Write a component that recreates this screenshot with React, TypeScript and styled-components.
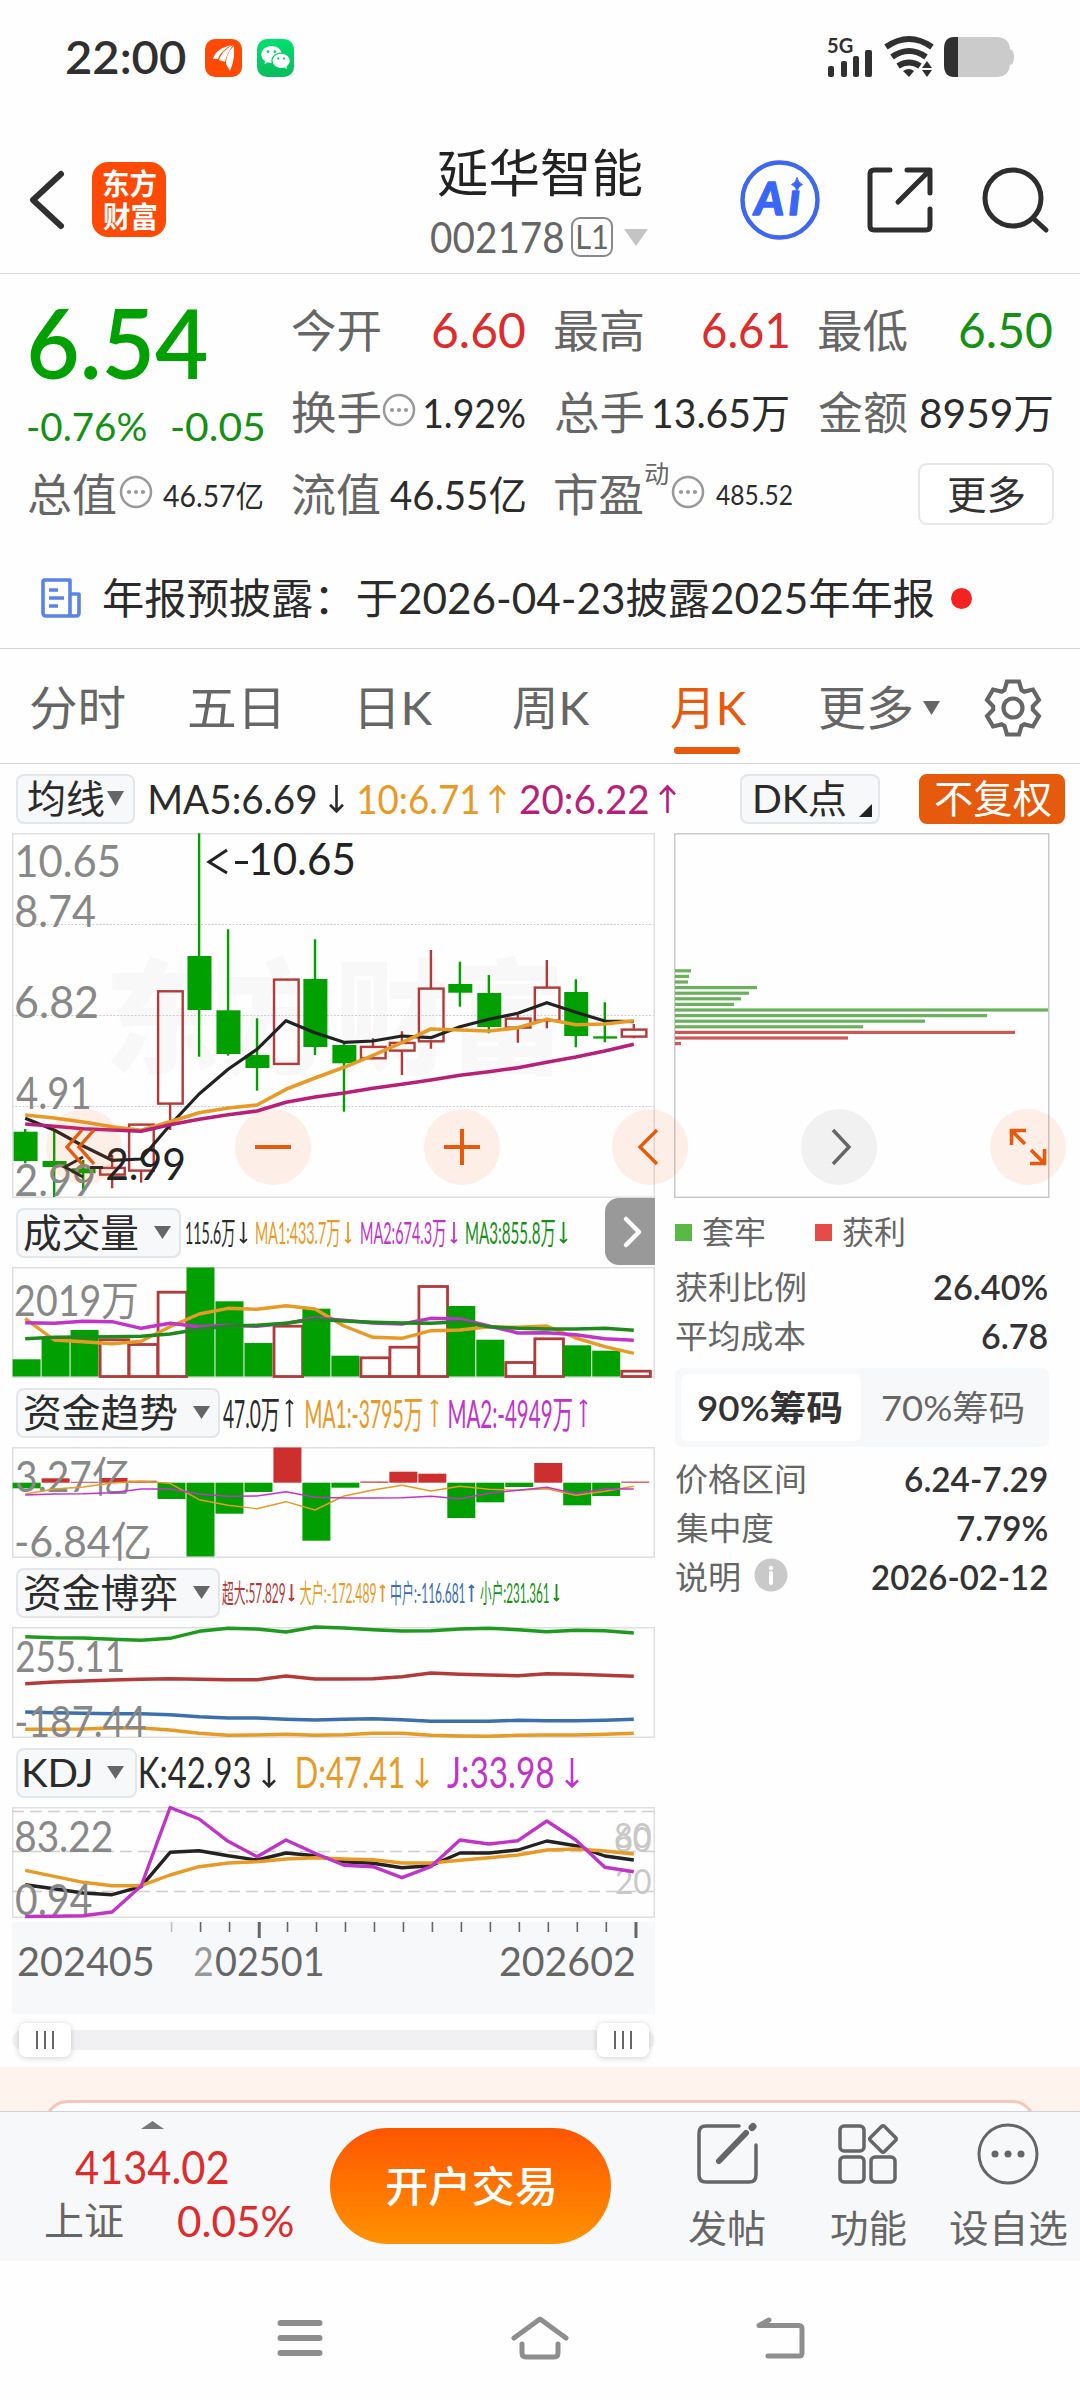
import React from 'react';
import styled, { createGlobalStyle, css } from 'styled-components';
import { RiWechatFill } from 'react-icons/ri';

const FONT = "Lato, 'Noto Sans CJK SC', sans-serif";

const C = {
  ink: '#2b2b2b',
  sub: '#666666',
  faint: '#888888',
  line: '#d4d4d4',
  red: '#dc2c2c',
  green: '#00a000',
  greenText: '#149014',
  orange: '#e79a26',
  magenta: '#b81f78',
  purple: '#c034c8',
  blue: '#3b6fae',
  wine: '#b23a38',
  brand: '#e55a0c',
  panel: '#f7f8fa',
};

const Global = createGlobalStyle`
  html, body { margin: 0; padding: 0; background: #fefefe; }
  * { box-sizing: border-box; }
  body { width: 1080px; height: 2400px; overflow: hidden; font-family: ${FONT}; color: ${C.ink}; }
  svg { display: block; flex: none; overflow: visible; }
`;

/* ---------- text that shrinks or stretches to its column ---------- */

let ctx: CanvasRenderingContext2D | null = null;
function inkBox(text: string, size: number, weight: number) {
  if (!ctx) ctx = document.createElement('canvas').getContext('2d');
  ctx!.font = `${weight} ${size}px ${FONT}`;
  const m = ctx!.measureText(text);
  return { left: m.actualBoundingBoxLeft, width: m.actualBoundingBoxLeft + m.actualBoundingBoxRight };
}

const FitBox = styled.span<{ $w: number; $size: number; $weight: number; $color?: string; $ml?: number; $lift?: number }>`
  display: block;
  flex: none;
  width: ${p => p.$w}px;
  height: ${p => p.$size}px;
  line-height: ${p => p.$size}px;
  font-size: ${p => p.$size}px;
  font-weight: ${p => p.$weight};
  margin-left: ${p => p.$ml ?? 0}px;
  margin-bottom: ${p => (p.$lift ?? 0) * 2}px;
  color: ${p => p.$color ?? 'inherit'};
  white-space: nowrap;
`;
const FitInner = styled.span`
  display: inline-block;
  transform-origin: 0 50%;
`;

type FitProps = { children: string; w: number; size: number; weight?: number; color?: string; ml?: number; lift?: number };
function Fit({ children, w, size, weight = 400, color, ml, lift }: FitProps) {
  const box = inkBox(children, size, weight);
  const s = w / box.width;
  return (
    <FitBox $w={w} $size={size} $weight={weight} $color={color} $ml={ml} $lift={lift}>
      <FitInner style={{ transform: `translateX(${box.left * s}px) scaleX(${s})` }}>{children}</FitInner>
    </FitBox>
  );
}

function ChartLabel({ x, y, w, size, color = C.faint, weight = 400, children }: {
  x: number; y: number; w: number; size: number; color?: string; weight?: number; children: string;
}) {
  const box = inkBox(children, size, weight);
  const s = w / box.width;
  return (
    <text transform={`translate(${x + box.left * s} ${y}) scale(${s} 1)`} fontFamily={FONT} fontSize={size} fontWeight={weight} fill={color}>
      {children}
    </text>
  );
}

/* ---------- status bar ---------- */

const StatusBar = styled.div`
  height: 115px;
  padding-left: 67px;
  display: flex;
  align-items: center;
`;
const AppBadge = styled.div<{ $bg: string; $ml: number }>`
  width: 37px;
  height: 38px;
  border-radius: 10px;
  margin-left: ${p => p.$ml}px;
  background: ${p => p.$bg};
  color: #fff;
  display: flex;
  align-items: center;
  justify-content: center;
`;
const StatusIcons = styled.div`
  margin-left: 532px;
`;

function Status() {
  return (
    <StatusBar>
      <Fit w={118} size={47} weight={600} color="#303030" lift={1}>22:00</Fit>
      <AppBadge $bg="#fe4a05" $ml={20}>
        <svg width="26" height="28" viewBox="0 0 26 28" fill="#fff">
          <path d="M2 15C4 8 9 4 20 1C13 6 9 9 7 15Z" />
          <path d="M8 16C10 10 14 5 22 1C18 7 15 12 14 18Z" />
          <path d="M15 20C15 13 18 6 23 2C23 9 24 15 19 27Z" />
        </svg>
      </AppBadge>
      <AppBadge $bg="linear-gradient(#00e070, #0cbc5c)" $ml={15}><RiWechatFill size={31} /></AppBadge>
      <StatusIcons>
        <svg width="190" height="44" viewBox="826 36 190 44" fill="#303030">
          <ChartLabel x={827} y={53} w={26} size={21} weight={700} color="#303030">5G</ChartLabel>
          <rect x="828" y="66" width="6" height="11" rx="2" />
          <rect x="841" y="61" width="6" height="16" rx="2" />
          <rect x="853" y="56" width="6" height="21" rx="2" />
          <rect x="865" y="50" width="7" height="27" rx="2" />
          <g fill="none" stroke="#303030" strokeWidth="6">
            <path d="M886 47Q909 31 932 47" />
            <path d="M892 57Q909 45 926 57" />
            <path d="M898 66Q909 59 920 66" />
          </g>
          <path d="M903 71Q909 67 914 71L909 77Z" />
          <path d="M927 61L932 68H922ZM922 70H932L927 77Z" />
          <path d="M958 37H996Q1010 37 1010 51V63Q1010 77 996 77H958Z" fill="#cbcbcb" />
          <path d="M1010 49Q1014 50 1014 57Q1014 64 1010 65Z" fill="#cbcbcb" />
          <path d="M958 37H954Q944 37 944 49V65Q944 77 954 77H958Z" />
        </svg>
      </StatusIcons>
    </StatusBar>
  );
}

/* ---------- header ---------- */

const Header = styled.header`
  height: 159px;
  padding: 11px 0 0 29px;
  display: flex;
  align-items: center;
  border-bottom: 1px solid ${C.line};
`;
const Brand = styled.div`
  width: 74px;
  height: 75px;
  margin-left: 28px;
  border-radius: 16px;
  background: #fe4a05;
  display: flex;
  flex-direction: column;
  align-items: center;
  justify-content: center;
  gap: 4px;
`;
const TitleCol = styled.div`
  margin-left: 264px;
  width: 310px;
  padding-top: 10px;
`;
const TitleLine = styled.div<{ $pl: number }>`
  height: 65px;
  padding-left: ${p => p.$pl}px;
  display: flex;
  align-items: center;
`;
const LevelTag = styled.span`
  width: 42px;
  height: 40px;
  margin-left: 8px;
  border: 2px solid #888;
  border-radius: 9px;
  display: flex;
  align-items: center;
  justify-content: center;
`;
const HeaderIcon = styled.div<{ $ml: number }>`
  margin-left: ${p => p.$ml}px;
`;

function Head() {
  return (
    <Header>
      <svg width="35" height="60" viewBox="0 0 35 60" fill="none" stroke="#303030" strokeWidth="6" strokeLinecap="round" strokeLinejoin="round">
        <path d="M32 4L4 30L32 56" />
      </svg>
      <Brand>
        <Fit w={53} size={29} weight={600} color="#fff">东方</Fit>
        <Fit w={53} size={29} weight={600} color="#fff">财富</Fit>
      </Brand>
      <TitleCol>
        <TitleLine $pl={8}><Fit w={204} size={51} color="#222">延华智能</Fit></TitleLine>
        <TitleLine $pl={1}>
          <Fit w={132} size={43} color={C.sub} lift={1}>002178</Fit>
          <LevelTag><Fit w={29} size={33} color={C.sub} lift={1}>L1</Fit></LevelTag>
          <HeaderIcon $ml={11}>
            <svg width="24" height="17"><path d="M0 0H24L12 17Z" fill="#c4c4c4" /></svg>
          </HeaderIcon>
        </TitleLine>
      </TitleCol>
      <svg width="80" height="82" viewBox="0 0 80 82">
        <circle cx="40" cy="41" r="37.5" fill="#fff" stroke="#3e66ee" strokeWidth="4.5" />
        <text x="14.500 49" y="56" fontFamily="Lato, sans-serif" fontSize="45" fontWeight="900" fontStyle="italic" fill="#3a66f8" stroke="#3a66f8" strokeWidth="1.500" strokeLinejoin="round">Ai</text>
        <circle cx="58" cy="24" r="7.500" fill="#fff" />
        <path d="M57 18.500Q58 24 62.500 25.500Q58 27 57 32.500Q56 27 51.500 25.500Q56 24 57 18.500Z" fill="#3a66f8" stroke="#3a66f8" />
      </svg>
      <HeaderIcon $ml={47}>
        <svg width="66" height="66" viewBox="0 0 66 66" fill="none" stroke="#2e2e2e" strokeWidth="5" strokeLinecap="round" strokeLinejoin="round">
          <path d="M23 3H7Q3 3 3 7V59Q3 63 7 63H59Q63 63 63 59V42" />
          <path d="M40 3H63V26M61 5L31 35" />
        </svg>
      </HeaderIcon>
      <HeaderIcon $ml={49}>
        <svg width="68" height="68" viewBox="0 0 68 68" fill="none" stroke="#2e2e2e" strokeWidth="5" strokeLinecap="round">
          <circle cx="31" cy="32" r="28" />
          <path d="M52 53L64 64" />
        </svg>
      </HeaderIcon>
    </Header>
  );
}

/* ---------- quote ---------- */

const Quote = styled.section`
  height: 262px;
  padding: 16px 28px 0 28px;
  display: flex;
`;
const QuoteCol = styled.div<{ $w: number; $ml?: number }>`
  width: ${p => p.$w}px;
  margin-left: ${p => p.$ml ?? 0}px;
`;
const QuoteRow = styled.div<{ $h?: number }>`
  height: ${p => p.$h ?? 82}px;
  display: flex;
  align-items: center;
  justify-content: space-between;
`;
const LabelGroup = styled.div`
  display: flex;
  align-items: center;
`;
const MoreButton = styled.button`
  width: 136px;
  height: 62px;
  padding: 0;
  margin: 0 -2px 2px auto;
  border: 2px solid #e6e7ea;
  border-radius: 9px;
  background: #fff;
  display: flex;
  align-items: center;
  justify-content: center;
  font-family: inherit;
`;
const HintBox = styled.span<{ $ml: number }>`
  margin: 0 0 7px ${p => p.$ml}px;
`;
const Hint = ({ ml }: { ml: number }) => (
  <HintBox $ml={ml}>
    <svg width="34" height="34" viewBox="0 0 34 34">
      <circle cx="17" cy="17" r="15" fill="none" stroke="#999" strokeWidth="2.500" />
      <circle cx="10" cy="17" r="2.100" fill="#999" /><circle cx="17" cy="17" r="2.100" fill="#999" /><circle cx="24" cy="17" r="2.100" fill="#999" />
    </svg>
  </HintBox>
);
const Name = ({ children }: { children: string }) => <Fit w={88} size={45} color={C.sub}>{children}</Fit>;

function QuotePanel() {
  return (
    <Quote>
      <QuoteCol $w={235}>
        <QuoteRow $h={110}><Fit w={177} size={96} weight={600} color={C.green} ml={2} lift={3}>6.54</Fit></QuoteRow>
        <QuoteRow $h={54}>
          <Fit w={118} size={39} color={C.greenText} lift={1}>-0.76%</Fit>
          <Fit w={91} size={39} color={C.greenText} lift={1}>-0.05</Fit>
        </QuoteRow>
        <QuoteRow>
          <LabelGroup><Name>总值</Name><Hint ml={3} /></LabelGroup>
          <Fit w={100} size={30}>46.57亿</Fit>
        </QuoteRow>
      </QuoteCol>
      <QuoteCol $w={234} $ml={29}>
        <QuoteRow><Name>今开</Name><Fit w={92} size={48} color={C.red} lift={1}>6.60</Fit></QuoteRow>
        <QuoteRow>
          <LabelGroup><Name>换手</Name><Hint ml={2} /></LabelGroup>
          <Fit w={100} size={40}>1.92%</Fit>
        </QuoteRow>
        <QuoteRow><Name>流值</Name><Fit w={135} size={40}>46.55亿</Fit></QuoteRow>
      </QuoteCol>
      <QuoteCol $w={233} $ml={30}>
        <QuoteRow><Name>最高</Name><Fit w={85} size={48} color={C.red} lift={1}>6.61</Fit></QuoteRow>
        <QuoteRow><Name>总手</Name><Fit w={134} size={40}>13.65万</Fit></QuoteRow>
        <QuoteRow>
          <LabelGroup><Name>市盈</Name><Fit w={23} size={25} color={C.sub} ml={2} lift={22}>动</Fit><Hint ml={3} /><Fit w={76} size={26} ml={11}>485.52</Fit></LabelGroup>
        </QuoteRow>
      </QuoteCol>
      <QuoteCol $w={233} $ml={31}>
        <QuoteRow><Name>最低</Name><Fit w={92} size={48} color={C.greenText} lift={1}>6.50</Fit></QuoteRow>
        <QuoteRow><Name>金额</Name><Fit w={132} size={40}>8959万</Fit></QuoteRow>
        <QuoteRow><MoreButton><Fit w={76} size={39} color="#333">更多</Fit></MoreButton></QuoteRow>
      </QuoteCol>
    </Quote>
  );
}

const News = styled.div`
  height: 113px;
  padding: 12px 0 0 41px;
  display: flex;
  align-items: center;
  border-bottom: 1px solid ${C.line};
`;
const RedDot = styled.i`
  width: 21px;
  height: 21px;
  margin-left: 17px;
  border-radius: 50%;
  background: #f52222;
`;

/* ---------- tabs ---------- */

const Tabs = styled.nav`
  height: 115px;
  padding: 3px 0 0 31px;
  display: flex;
  align-items: center;
  border-bottom: 1px solid ${C.line};
`;
const Tab = styled.div<{ $ml?: number; $on?: boolean }>`
  position: relative;
  margin-left: ${p => p.$ml ?? 0}px;
  color: ${p => (p.$on ? C.brand : C.sub)};
  ${p => p.$on && css`
    &::after {
      content: '';
      position: absolute;
      left: 3px;
      top: 63px;
      width: 66px;
      height: 7px;
      border-radius: 3px;
      background: ${C.brand};
    }
  `}
`;
const CaretBox = styled.span<{ $ml: number }>`
  margin-left: ${p => p.$ml}px;
`;
const Caret = ({ ml, w = 17, h = 13 }: { ml: number; w?: number; h?: number }) => (
  <CaretBox $ml={ml}><svg width={w} height={h}><path d={`M0 0H${w}L${w / 2} ${h}Z`} fill="#666" /></svg></CaretBox>
);

function gearPath() {
  const pts: string[] = [];
  for (let k = 0; k < 6; k++) {
    const a = (k * Math.PI) / 3;
    [[-8.5, -18], [-6, -26.5], [6, -26.5], [8.5, -18]].forEach(([x, y]) => {
      pts.push(`${(x * Math.cos(a) - y * Math.sin(a)).toFixed(2)},${(x * Math.sin(a) + y * Math.cos(a)).toFixed(2)}`);
    });
  }
  return pts.join(' ');
}

const IndicatorRow = styled.div`
  height: 69px;
  padding-left: 16px;
  display: flex;
  align-items: center;
`;
const Chip = styled.div<{ $w: number; $pl: number; $ml?: number; $solid?: boolean }>`
  width: ${p => p.$w}px;
  height: 50px;
  flex: none;
  margin-left: ${p => p.$ml ?? 0}px;
  padding-left: ${p => p.$pl}px;
  border-radius: 8px;
  display: flex;
  align-items: center;
  border: 2px solid ${p => (p.$solid ? C.brand : '#e2e5ea')};
  background: ${p => (p.$solid ? C.brand : C.panel)};
  color: ${p => (p.$solid ? '#fff' : C.ink)};
`;

const ArrowBox = styled.span<{ $ml: number }>`
  margin-left: ${p => p.$ml}px;
`;
function Arrow({ up, w, h, ml, color }: { up?: boolean; w: number; h: number; ml: number; color: string }) {
  const k = w * 0.55;
  const d = up
    ? `M${w / 2} ${h}V1M1 ${k}L${w / 2} 1.500L${w - 1} ${k}`
    : `M${w / 2} 0V${h - 1}M1 ${h - k}L${w / 2} ${h - 1.5}L${w - 1} ${h - k}`;
  return (
    <ArrowBox $ml={ml}>
      <svg width={w} height={h} fill="none" stroke={color} strokeWidth={w > 11 ? 2.6 : 1.8}><path d={d} /></svg>
    </ArrowBox>
  );
}

type Reading = { t: string; w: number; ml: number; aw: number; aml: number; up?: boolean; c: string };
function Readings({ items, size, h, lift }: { items: Reading[]; size: number; h: number; lift?: number }) {
  return (
    <>
      {items.map(r => (
        <React.Fragment key={r.t}>
          <Fit w={r.w} size={size} ml={r.ml} color={r.c} lift={lift}>{r.t}</Fit>
          <Arrow w={r.aw} h={h} ml={r.aml} up={r.up} color={r.c} />
        </React.Fragment>
      ))}
    </>
  );
}

/* ---------- chart data ---------- */

const W = 643;
const cx = (i: number) => 13.2 + 28.98 * i;
const pts = (ys: number[]) => ys.map((y, i) => `${cx(i).toFixed(1)},${y}`).join(' ');

// [rising, body top, body bottom, wick top, wick bottom]
const candles: [number, number, number, number, number][] = [
  [0, 298.7, 328, 296, 330.3], [0, 328, 334, 296, 364], [0, 335.3, 340.3, 327, 357], [1, 334.3, 341, 322, 355.3],
  [1, 291, 337, 291, 349.7], [1, 157.7, 270, 157.7, 297], [0, 123, 177, 0.3, 223.7], [0, 177.3, 221, 96.3, 222.7],
  [0, 222, 235, 185.3, 257.7], [1, 146, 230.3, 146, 230.3], [0, 146, 214, 106.3, 222], [0, 212, 230.3, 209.7, 278.7],
  [1, 213.3, 224.7, 205.3, 226.3], [1, 209.3, 217, 198.3, 242], [1, 155, 207.7, 117, 215.7], [0, 151, 159.7, 128.7, 173.7],
  [0, 160, 194, 142, 200.3], [1, 185, 194, 182, 209.7], [1, 154, 187, 127, 195.3], [0, 159, 203, 146.3, 214.3],
  [0, 203.3, 205.6, 169.3, 209.3], [1, 196, 203, 191, 205.3],
];
const ma5 = [285.3, 297, 313, 327.3, 326, 292, 261, 236.3, 216.3, 187.7, 199.7, 209.3, 208, 203, 204.7, 193.7, 186.3, 180.3, 169.7, 179.3, 188, 188.7];
const ma10 = [282, 285, 289, 293.7, 297.3, 288.7, 279.7, 275, 272, 256.3, 245, 234.3, 222.3, 209.7, 196, 197, 198, 194.7, 186.3, 191.7, 191, 187.7];
const ma20 = [291, 293.3, 295.7, 297, 298.3, 291.7, 286.3, 281.7, 278, 269.3, 264, 260, 255.3, 251.3, 247, 242.3, 238.7, 234.7, 229.3, 224, 218, 211.3];

const vol: [number, number][] = [
  [0, 92.3], [0, 70], [0, 63], [1, 71.3], [1, 76], [1, 23.7], [0, 0.5], [0, 34.3], [0, 76], [1, 57.7], [0, 41.7],
  [0, 88.7], [1, 89.3], [1, 78.7], [1, 18], [0, 39], [0, 72.7], [1, 94], [1, 70.3], [0, 78.3], [0, 83.7], [1, 102.7],
];
const volMa1 = [51.7, 73, 74.7, 76.7, 74.3, 59.7, 47, 41.3, 42.3, 38.7, 42, 59, 70.3, 71.3, 63.7, 63, 59.7, 60.3, 59, 71, 79.7, 86.3];
const volMa2 = [55.7, 56.3, 54.3, 54.7, 61.3, 56.3, 59.7, 58.3, 59.3, 56.3, 51, 53.3, 56, 57, 51.3, 52, 59, 66, 65.7, 67.7, 71.7, 73.3];
const volMa3 = [71.7, 70.3, 70, 69.7, 69.3, 67, 62.3, 59, 58.3, 56.3, 52.3, 54, 55.3, 56, 56.3, 54.7, 59.7, 61.3, 62, 62, 61.3, 63.3];

const ZERO = 35.7;
const flow = [41.3, 31.3, 34.8, 31, 33.7, 52, 109.5, 66.7, 45, 0.5, 93.7, 40.7, 34.5, 24.7, 26.7, 71, 55.3, 40, 16, 58.3, 49, 34.6];
const flowMa1 = [47, 42, 40, 36, 34.3, 36.3, 52.7, 58.3, 61.7, 54.7, 63, 49, 43, 38.3, 44, 39.3, 42.3, 43.3, 41.7, 48.3, 44.3, 39.3];
const flowMa2 = [48, 47, 46.7, 45.7, 42, 42, 47, 49.3, 49, 44.7, 50.3, 51, 51, 50.7, 49.3, 51.7, 46.3, 43.3, 40.3, 46.7, 42, 42];

const gSmall = [9.7, 10.7, 11, 12.3, 13.3, 11.3, 4.3, 1.3, 2, 5, 0, 1, 2.7, 4, 3.7, 2, 1.3, 2.7, 4.7, 3.3, 3.7, 6];
const gHuge = [56.7, 55, 54, 53, 52.3, 51.7, 52.3, 52.7, 52.7, 49, 52, 52, 51.7, 49.7, 46, 47.3, 48, 48.7, 46.7, 47.3, 48.3, 49.3];
const gMid = [85, 85.7, 86.3, 86.7, 86.7, 87.7, 89.7, 91, 91, 92.3, 93, 92.3, 91.7, 92.7, 94.3, 94.3, 94.3, 93.3, 93.7, 93.7, 93.3, 92.3];
const gBig = [102.3, 102.3, 102, 101, 101, 103, 106.3, 108.3, 108, 107.3, 108.3, 107.7, 106.3, 106.3, 108.3, 109, 109.3, 108.3, 108, 108, 107.3, 106.3];

const kK = [77.7, 81.7, 86, 87.7, 79.7, 45.3, 43.7, 48.7, 53, 46, 48.7, 54.7, 56.3, 60.7, 58.7, 46, 46, 43, 34, 38.7, 49, 53];
const kD = [63.3, 69.3, 75.3, 78.7, 78.7, 68, 59.7, 56, 54.7, 52, 50.7, 52, 52.7, 56, 56, 53.3, 50.7, 48, 43, 42, 44, 47];
const kJ = [109.5, 109.3, 108.7, 105, 79, 0.5, 12, 34.3, 49.7, 33, 46.3, 58.3, 59.7, 70.7, 59.7, 33, 37, 33.7, 14, 33, 60.3, 64.7];

const Curve = ({ ys, c, sw = 3.4 }: { ys: number[]; c: string; sw?: number }) => (
  <polyline points={pts(ys)} fill="none" stroke={c} strokeWidth={sw} strokeLinejoin="round" />
);
const Frame = ({ h }: { h: number }) => <rect x="0.75" y="0.75" width={W - 1.5} height={h - 1.5} fill="none" stroke="#dfdfdf" strokeWidth="1.500" />;

const MainChart = () => (
  <svg width={W} height="365" viewBox={`0 0 ${W} 365`}>
    <ChartLabel x={98} y={231} w={447} size={124} weight={800} color="#f8f8f8">东方财富</ChartLabel>
    {[91.5, 182.5, 273.5].map(y => <line key={y} x1="0" x2={W} y1={y} y2={y} stroke="#cfcfcf" strokeWidth="1" strokeDasharray="2 1.500" />)}
    <Frame h={365} />
    {candles.map(([up, t, b, wt, wb], i) => up ? (
      <g key={i} stroke={C.wine} strokeWidth="2.400" fill="none">
        <path d={`M${cx(i)} ${wt}V${t}M${cx(i)} ${b}V${wb}`} />
        <rect x={cx(i) - 12} y={t + 0.6} width="24.600" height={b - t} />
      </g>
    ) : (
      <g key={i} fill={C.green}>
        <rect x={cx(i) - 1.2} y={wt} width="2.400" height={wb - wt} />
        <rect x={cx(i) - 11.6} y={t} width="24" height={b - t} />
      </g>
    ))}
    <Curve ys={ma5} c="#222" sw={3.2} />
    <Curve ys={ma10} c={C.orange} sw={3.6} />
    <Curve ys={ma20} c={C.magenta} sw={3.6} />
    <ChartLabel x={5} y={43.5} w={102} size={45}>10.65</ChartLabel>
    <ChartLabel x={4} y={94} w={79} size={45}>8.74</ChartLabel>
    <ChartLabel x={4} y={185} w={81} size={45}>6.82</ChartLabel>
    <ChartLabel x={4} y={276} w={73} size={45}>4.91</ChartLabel>
    <ChartLabel x={4} y={363} w={78} size={45}>2.99</ChartLabel>
    <path d="M215 17L197 29L215 40M223 29.500H236" fill="none" stroke="#222" strokeWidth="3" />
    <ChartLabel x={239} y={42} w={103} size={45} color="#222">10.65</ChartLabel>
    <path d="M71 324L53 334L71 344M78 334.500H91" fill="none" stroke="#222" strokeWidth="3" />
    <ChartLabel x={95} y={346.500} w={77} size={45} color="#222">2.99</ChartLabel>
  </svg>
);

const VolumeChart = () => (
  <svg width={W} height="111" viewBox={`0 0 ${W} 111`}>
    <Frame h={111} />
    {vol.map(([up, t], i) => up
      ? <rect key={i} x={cx(i) - 12} y={t + 1.5} width="28.600" height={108 - t} fill="#fff" stroke={C.wine} strokeWidth="2.800" />
      : <rect key={i} x={cx(i) - 12.6} y={t} width="28" height={109.5 - t} fill={C.green} />)}
    <ChartLabel x={3} y={48.500} w={122} size={42}>2019万</ChartLabel>
    <Curve ys={volMa1} c={C.orange} />
    <Curve ys={volMa2} c={C.purple} />
    <Curve ys={volMa3} c="#1e8a1e" />
  </svg>
);

const FlowChart = () => (
  <svg width={W} height="111" viewBox={`0 0 ${W} 111`}>
    <Frame h={111} />
    {flow.map((v, i) => (
      <rect key={i} x={cx(i) - 12.6} y={Math.min(v, ZERO)} width="28" height={Math.abs(v - ZERO)} fill={v < ZERO ? '#cc2f2d' : C.green} />
    ))}
    <ChartLabel x={4} y={45} w={113} size={42}>3.27亿</ChartLabel>
    <ChartLabel x={4} y={109.500} w={134} size={42}>-6.84亿</ChartLabel>
    <Curve ys={flowMa1} c={C.orange} sw={1.4} />
    <Curve ys={flowMa2} c={C.purple} sw={1.4} />
  </svg>
);

const GameChart = () => (
  <svg width={W} height="111" viewBox={`0 0 ${W} 111`}>
    <Frame h={111} />
    <Curve ys={gSmall} c="#1e9a1e" />
    <Curve ys={gHuge} c={C.wine} />
    <Curve ys={gMid} c={C.blue} />
    <Curve ys={gBig} c={C.orange} />
    <ChartLabel x={4} y={44.500} w={107} size={42}>255.11</ChartLabel>
    <ChartLabel x={4} y={110} w={130} size={42}>-187.44</ChartLabel>
  </svg>
);

const KdjChart = () => (
  <svg width={W} height="111" viewBox={`0 0 ${W} 111`}>
    <Frame h={111} />
    {[4.5, 44.5, 84.5].map(y => <line key={y} x1="0" x2={W} y1={y} y2={y} stroke="#cfcfcf" strokeWidth="1.300" strokeDasharray="12 6" />)}
    <ChartLabel x={603} y={40.500} w={36} size={34} color="#c8c8c8">80</ChartLabel>
    <ChartLabel x={603} y={45} w={36} size={34} color="#c8c8c8">60</ChartLabel>
    <ChartLabel x={604} y={86.500} w={35} size={34} color="#c8c8c8">20</ChartLabel>
    <Curve ys={kK} c="#222" />
    <Curve ys={kD} c={C.orange} />
    <ChartLabel x={4} y={44.500} w={96} size={42}>83.22</ChartLabel>
    <ChartLabel x={4} y={108} w={76} size={42}>0.94</ChartLabel>
    <Curve ys={kJ} c={C.purple} />
  </svg>
);

/* ---------- left column ---------- */

const Content = styled.div`
  position: relative;
  height: 1234px;
  padding-left: 12px;
  display: flex;
  align-items: flex-start;
`;
const ChartCol = styled.div`
  width: 643px;
`;
const SubHead = styled.div`
  position: relative;
  height: 69px;
  padding-left: 4px;
  display: flex;
  align-items: center;
`;
const FoldTab = styled.div`
  position: absolute;
  right: 0;
  top: 0;
  width: 50px;
  height: 67px;
  padding-left: 5px;
  border-radius: 14px 0 0 14px;
  background: #999;
  display: flex;
  align-items: center;
  justify-content: center;
`;
const Axis = styled.div`
  height: 92px;
  margin-top: 4px;
  background: ${C.panel};
`;
const AxisDates = styled.div`
  padding: 2px 0 0 6px;
  display: flex;
  align-items: center;
`;
const Slider = styled.div`
  height: 51px;
  display: flex;
  align-items: center;
`;
const Track = styled.div`
  flex: 1;
  height: 20px;
  border-radius: 10px;
  background: #f1f1f3;
  display: flex;
  align-items: center;
  justify-content: space-between;
  padding: 0 6px 0 7px;
`;
const Grip = styled.div`
  width: 52px;
  height: 34px;
  border-radius: 7px;
  background: #fff;
  box-shadow: 0 1px 6px rgba(0, 0, 0, 0.18);
  display: flex;
  align-items: center;
  justify-content: center;
  gap: 6px;
  i { width: 2px; height: 18px; background: #666; }
`;

function SubHeader({ name, nw, size = 39, boxW, children }: { name: string; nw: number; size?: number; boxW: number; children: React.ReactNode }) {
  return (
    <SubHead>
      <Chip $w={boxW} $pl={6}>
        <Fit w={nw} size={size}>{name}</Fit>
        <Caret ml={16} w={17} h={13} />
      </Chip>
      {children}
    </SubHead>
  );
}

/* ---------- right column ---------- */

const SideCol = styled.div`
  width: 375px;
  margin-left: 19px;
`;
const Legend = styled.div`
  height: 64px;
  padding: 4px 0 0 1px;
  display: flex;
  align-items: center;
`;
const Swatch = styled.i<{ $c: string; $ml?: number }>`
  width: 17px;
  height: 17px;
  margin-left: ${p => p.$ml ?? 0}px;
  background: ${p => p.$c};
`;
const StatRow = styled.div`
  height: 49px;
  padding: 0 2px 0 2px;
  display: flex;
  align-items: center;
  justify-content: space-between;
`;
const Toggle = styled.div`
  height: 79px;
  margin: 8px 0 7px 1px;
  padding: 6px;
  border-radius: 7px;
  background: ${C.panel};
  display: flex;
`;
const ToggleItem = styled.div<{ $on?: boolean }>`
  width: ${p => (p.$on ? 180 : 182)}px;
  padding-right: 3px;
  border-radius: 7px;
  background: ${p => (p.$on ? '#fff' : 'transparent')};
  display: flex;
  align-items: center;
  justify-content: center;
`;
const InfoDot = styled.span`
  margin: 0 0 4px 15px;
`;

const chips = [16, 14, 13, 82, 74, 66, 59, 373, 312, 250, 188, 340, 173, 6];
const ChipsChart = () => (
  <svg width="376" height="365" viewBox="0 0 376 365">
    <rect x="0.75" y="0.75" width="374" height="363.500" fill="none" stroke="#c9c9c9" strokeWidth="1.500" />
    {chips.map((w, i) => <rect key={i} x="1" y={136.200 + i * 5.6} width={w} height="3.200" fill={i < 11 ? '#6bb05c' : '#cb5956'} />)}
  </svg>
);

const Stat = ({ name, nw, value, vw, extra }: { name: string; nw: number; value: string; vw: number; extra?: React.ReactNode }) => (
  <StatRow>
    <LabelGroup><Fit w={nw} size={32} color={C.sub}>{name}</Fit>{extra}</LabelGroup>
    <Fit w={vw} size={35} weight={600} color="#333">{value}</Fit>
  </StatRow>
);

/* ---------- floating controls over the charts ---------- */

const Floats = styled.div`
  position: absolute;
  left: 46px;
  top: 276px;
  display: flex;
  gap: 112.8px;
`;
const FloatButton = styled.button<{ $gray?: boolean }>`
  width: 76px;
  height: 76px;
  padding: 0;
  border: 0;
  border-radius: 50%;
  background: ${p => (p.$gray ? 'rgba(90,90,90,0.08)' : 'rgba(250,100,30,0.10)')};
  color: ${p => (p.$gray ? C.sub : C.brand)};
  display: flex;
  align-items: center;
  justify-content: center;
`;
const FloatIcon = ({ d, sw = 3.4 }: { d: string; sw?: number }) => (
  <svg width="44" height="44" viewBox="-22 -22 44 44" fill="none" stroke="currentColor" strokeWidth={sw}><path d={d} /></svg>
);

/* ---------- bottom ---------- */

const Promo = styled.div`
  height: 44px;
  padding: 33px 44px 0;
  overflow: hidden;
  background: #fff3ee;
`;
const PromoCard = styled.div`
  height: 80px;
  border: 3px solid #f6c6ba;
  border-radius: 24px;
  background: #fff;
`;
const BottomBar = styled.div`
  height: 150px;
  border-top: 1px solid #d0d2d6;
  background: ${C.panel};
  display: flex;
`;
const IndexBox = styled.div`
  width: 330px;
  padding-left: 45px;
`;
const IndexLine = styled.div<{ $h: number; $pl: number }>`
  height: ${p => p.$h}px;
  padding-left: ${p => p.$pl}px;
  display: flex;
  align-items: center;
`;
const TradeButton = styled.button`
  width: 281px;
  height: 116px;
  margin-top: 16px;
  padding: 0;
  border: 0;
  border-radius: 58px;
  background: linear-gradient(#ff5500, #ff9200);
  display: flex;
  align-items: center;
  justify-content: center;
  font-family: inherit;
`;
const Action = styled.div<{ $w: number; $ml: number }>`
  width: ${p => p.$w}px;
  margin-left: ${p => p.$ml}px;
  padding-top: 11px;
  display: flex;
  flex-direction: column;
  align-items: center;
  gap: 23px;
`;
const NavBar = styled.div`
  height: 139px;
  padding: 15px 0 0 277px;
  display: flex;
  align-items: center;
`;
const NavSlot = styled.div<{ $ml: number }>`
  margin-left: ${p => p.$ml}px;
`;

const ActionSvg = ({ children }: { children: React.ReactNode }) => (
  <svg width="62" height="62" viewBox="0 0 62 62" fill="none" stroke="#666" strokeWidth="3.500" strokeLinecap="round" strokeLinejoin="round">{children}</svg>
);

export default function App() {
  return (
    <>
      <Global />
      <Status />
      <Head />
      <QuotePanel />
      <News>
        <svg width="40" height="40" viewBox="0 0 40 40" fill="none" stroke="#5b82e8" strokeWidth="3.600" strokeLinejoin="round">
          <path d="M3 2H29V38H5Q2 38 2 35V3ZM29 16H38V35Q38 38 35 38H29" />
          <path d="M8 12H17M8 20H23M8 28H17" />
        </svg>
        <Fit w={830} size={42} ml={23}>年报预披露：于2026-04-23披露2025年年报</Fit>
        <RedDot />
      </News>
      <Tabs>
        <Tab><Fit w={94} size={47}>分时</Fit></Tab>
        <Tab $ml={64}><Fit w={90} size={47}>五日</Fit></Tab>
        <Tab $ml={82}><Fit w={72} size={47}>日K</Fit></Tab>
        <Tab $ml={80}><Fit w={77} size={47}>周K</Fit></Tab>
        <Tab $ml={81} $on><Fit w={76} size={47}>月K</Fit></Tab>
        <Tab $ml={73}><Fit w={92} size={47}>更多</Fit></Tab>
        <Caret ml={11} w={17} h={14} />
        <NavSlot $ml={44}>
          <svg width="58" height="58" viewBox="-29 -29 58 58" fill="none" stroke="#666" strokeWidth="4.200">
            <polygon points={gearPath()} />
            <circle r="9.500" />
          </svg>
        </NavSlot>
      </Tabs>
      <IndicatorRow>
        <Chip $w={119} $pl={10}><Fit w={76} size={39}>均线</Fit><Caret ml={3} w={17} h={15} /></Chip>
        <Readings size={41} h={28} items={[
          { t: 'MA5:6.69', w: 166, ml: 15, aw: 15, aml: 13, c: C.ink },
          { t: '10:6.71', w: 119, ml: 15, aw: 17, aml: 11, up: true, c: C.orange },
          { t: '20:6.22', w: 128, ml: 14, aw: 17, aml: 11, up: true, c: C.magenta },
        ]} />
        <Chip $w={140} $pl={13} $ml={64}>
          <Fit w={91} size={39}>DK点</Fit>
          <NavSlot $ml={13}><svg width="13" height="36"><path d="M13 23V36H0Z" fill="#222" /></svg></NavSlot>
        </Chip>
        <Chip $w={146} $pl={14} $ml={39} $solid><Fit w={116} size={39}>不复权</Fit></Chip>
      </IndicatorRow>
      <Content>
        <ChartCol>
          <MainChart />
          <SubHeader name="成交量" nw={114} boxW={165}>
            <Readings size={31} h={22} items={[
              { t: '115.6万', w: 49, ml: 5, aw: 9, aml: 4, c: C.ink },
              { t: 'MA1:433.7万', w: 84, ml: 8, aw: 8, aml: 4, c: C.orange },
              { t: 'MA2:674.3万', w: 85, ml: 9, aw: 8, aml: 4, c: C.purple },
              { t: 'MA3:855.8万', w: 89, ml: 8, aw: 9, aml: 4, c: C.greenText },
            ]} />
            <FoldTab>
              <svg width="20" height="32" fill="none" stroke="#fff" strokeWidth="4.500" strokeLinecap="round" strokeLinejoin="round"><path d="M3 3L16 16L3 29" /></svg>
            </FoldTab>
          </SubHeader>
          <VolumeChart />
          <SubHeader name="资金趋势" nw={153} boxW={204}>
            <Readings size={38} h={28} items={[
              { t: '47.0万', w: 56, ml: 3, aw: 9, aml: 6, up: true, c: C.ink },
              { t: 'MA1:-3795万', w: 116, ml: 12, aw: 9, aml: 8, up: true, c: C.orange },
              { t: 'MA2:-4949万', w: 123, ml: 10, aw: 9, aml: 7, up: true, c: C.purple },
            ]} />
          </SubHeader>
          <FlowChart />
          <SubHeader name="资金博弈" nw={153} boxW={204}>
            <Readings size={26} h={18} items={[
              { t: '超大:57.829', w: 63, ml: 2, aw: 7, aml: 3, c: C.wine },
              { t: '大户:-172.489', w: 76, ml: 5, aw: 7, aml: 3, up: true, c: C.orange },
              { t: '中户:-116.681', w: 74, ml: 5, aw: 7, aml: 3, up: true, c: C.blue },
              { t: '小户:231.361', w: 69, ml: 5, aw: 7, aml: 4, c: C.greenText },
            ]} />
          </SubHeader>
          <GameChart />
          <SubHeader name="KDJ" nw={67} size={39} boxW={121}>
            <Readings size={43} h={30} lift={1} items={[
              { t: 'K:42.93', w: 110, ml: 3, aw: 14, aml: 12, c: C.ink },
              { t: 'D:47.41', w: 106, ml: 21, aw: 14, aml: 12, c: C.orange },
              { t: 'J:33.98', w: 106, ml: 18, aw: 14, aml: 12, c: C.purple },
            ]} />
          </SubHeader>
          <KdjChart />
          <Axis>
            <svg width={W} height="16">
              {Array.from({ length: 17 }, (_, k) => k + 5).map(i => {
                const major = i === 8 || i === 21;
                return <rect key={i} x={cx(i) + 0.7} y="0" width={major ? 3 : 1.6} height={major ? 16 : 10} fill="#666" opacity={i === 5 ? 0.4 : 1} />;
              })}
            </svg>
            <AxisDates>
              <Fit w={135} size={41} color={C.sub}>202405</Fit>
              <Fit w={18} size={41} color="#999" ml={41}>2</Fit>
              <Fit w={106} size={41} color={C.sub} ml={4}>02501</Fit>
              <Fit w={134} size={41} color={C.sub} ml={178}>202602</Fit>
            </AxisDates>
          </Axis>
          <Slider>
            <Track>
              <Grip><i /><i /><i /></Grip>
              <Grip><i /><i /><i /></Grip>
            </Track>
          </Slider>
        </ChartCol>
        <SideCol>
          <ChipsChart />
          <Legend>
            <Swatch $c="#59b946" />
            <Fit w={62} size={32} ml={11} color={C.sub}>套牢</Fit>
            <Swatch $c="#e64a49" $ml={50} />
            <Fit w={61} size={32} ml={11} color={C.sub}>获利</Fit>
          </Legend>
          <Stat name="获利比例" nw={129} value="26.40%" vw={113} />
          <Stat name="平均成本" nw={129} value="6.78" vw={65} />
          <Toggle>
            <ToggleItem $on><Fit w={144} size={35} weight={600} color="#333">90%筹码</Fit></ToggleItem>
            <ToggleItem><Fit w={141} size={35} color={C.sub} ml={3}>70%筹码</Fit></ToggleItem>
          </Toggle>
          <Stat name="价格区间" nw={129} value="6.24-7.29" vw={142} />
          <Stat name="集中度" nw={97} value="7.79%" vw={90} />
          <Stat name="说明" nw={63} value="2026-02-12" vw={175} extra={
            <InfoDot>
              <svg width="34" height="34" viewBox="0 0 34 34">
                <circle cx="17" cy="17" r="16.500" fill="#c9c9c9" />
                <circle cx="17" cy="10" r="2.200" fill="#fff" /><path d="M17 15V25" stroke="#fff" strokeWidth="4" strokeLinecap="round" />
              </svg>
            </InfoDot>
          } />
        </SideCol>
        <Floats>
          <FloatButton><FloatIcon d="M-2 -17L-17 0L-2 17M10 -17L-5 0L10 17" /></FloatButton>
          <FloatButton><FloatIcon d="M-18 0H18" sw={4} /></FloatButton>
          <FloatButton><FloatIcon d="M-18 0H18M0 -18V18" sw={4} /></FloatButton>
          <FloatButton><FloatIcon d="M7 -17L-10 0L7 17" /></FloatButton>
          <FloatButton $gray><FloatIcon d="M-6 -17L10 0L-6 17" /></FloatButton>
          <FloatButton><FloatIcon d="M-2 -16.500H-16.500V-2M-16 -16L-3 -3M2 16.500H16.500V2M16 16L3 3" sw={3.6} /></FloatButton>
        </Floats>
      </Content>
      <Promo><PromoCard /></Promo>
      <BottomBar>
        <IndexBox>
          <IndexLine $h={26} $pl={96}><svg width="23" height="8"><path d="M0 8H23L11.500 0Z" fill="#777" /></svg></IndexLine>
          <IndexLine $h={58} $pl={30}><Fit w={153} size={46} color={C.red}>4134.02</Fit></IndexLine>
          <IndexLine $h={48} $pl={0}>
            <Fit w={78} size={39} color={C.sub}>上证</Fit>
            <Fit w={115} size={43} ml={55} color={C.red}>0.05%</Fit>
          </IndexLine>
        </IndexBox>
        <TradeButton><Fit w={168} size={42} weight={500} color="#fff">开户交易</Fit></TradeButton>
        <Action $w={80} $ml={76}>
          <ActionSvg>
            <path d="M43 3H10Q3 3 3 10V52Q3 59 10 59H53Q60 59 60 52V22" />
            <path d="M23 38L50 10" strokeWidth="6" /><path d="M56 4.500L57 3.500" strokeWidth="7" />
          </ActionSvg>
          <Fit w={76} size={38} color={C.sub}>发帖</Fit>
        </Action>
        <Action $w={80} $ml={61}>
          <ActionSvg>
            <rect x="3" y="3" width="24" height="25" rx="4" />
            <rect x="3" y="34" width="24" height="25" rx="4" />
            <rect x="34" y="34" width="24" height="25" rx="4" />
            <path d="M44.500 3.500Q46 2 47.500 3.500L58.500 14.500Q60 16 58.500 17.500L47.500 28.500Q46 30 44.500 28.500L33.500 17.500Q32 16 33.500 14.500Z" />
          </ActionSvg>
          <Fit w={75} size={38} color={C.sub}>功能</Fit>
        </Action>
        <Action $w={120} $ml={40}>
          <ActionSvg>
            <circle cx="31" cy="31" r="29" strokeWidth="3" />
            <g fill="#666" stroke="none"><circle cx="18" cy="31" r="3.500" /><circle cx="31" cy="31" r="3.500" /><circle cx="44" cy="31" r="3.500" /></g>
          </ActionSvg>
          <Fit w={117} size={38} color={C.sub}>设自选</Fit>
        </Action>
      </BottomBar>
      <NavBar>
        <svg width="46" height="38" fill="none" stroke="#8e8e8e" strokeWidth="6" strokeLinecap="round"><path d="M3.500 4H42.500M3.500 19H42.500M3.500 34H42.500" /></svg>
        <NavSlot $ml={188}>
          <svg width="58" height="44" viewBox="0 0 58 44" fill="none" stroke="#8e8e8e" strokeWidth="5" strokeLinecap="round" strokeLinejoin="round">
            <path d="M3 22L29 3L55 22" /><path d="M11 28V37Q11 41 15 41H43Q47 41 47 37V28" />
          </svg>
        </NavSlot>
        <NavSlot $ml={187}>
          <svg width="50" height="44" viewBox="0 0 50 44" fill="none" stroke="#8e8e8e" strokeWidth="5" strokeLinecap="round" strokeLinejoin="round">
            <path d="M13 4L3 9.500H43Q46 9.500 46 13V37Q46 40 43 40H12" />
          </svg>
        </NavSlot>
      </NavBar>
    </>
  );
}
